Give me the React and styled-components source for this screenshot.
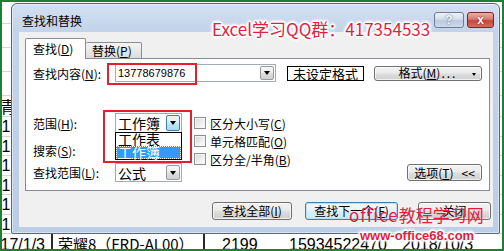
import React from 'react';
import styled, { createGlobalStyle, css } from 'styled-components';

const UI = `"Noto Sans CJK SC", "Noto Sans", sans-serif`;

const Global = createGlobalStyle`
  html, body { margin: 0; padding: 0; background: #fff; }
  body { width: 504px; height: 251px; overflow: hidden; font-family: ${UI}; }
  u { text-decoration: underline; text-underline-offset: 1px; }
`;

const Page = styled.div`
  position: relative;
  width: 504px;
  height: 251px;
  overflow: hidden;
  background: #fff;
  &::after {
    content: '';
    position: absolute;
    inset: 0;
    border: 2px solid #1f7f34;
    pointer-events: none;
    z-index: 20;
  }
`;

/* ---------- spreadsheet behind ---------- */
const Sheet = styled.div`
  display: flex;
  flex-direction: column;
  width: 504px;
`;

const SheetRow = styled.div`
  display: flex;
  flex: none;
  height: ${p => p.$h}px;
  box-sizing: border-box;
  border-bottom: 1px solid #d6d6d6;
  font: 16px/18px "Liberation Sans", Arial, sans-serif;
  color: #000;
`;

const Cell = styled.div`
  flex: none;
  width: ${p => p.$w}px;
  box-sizing: border-box;
  overflow: hidden;
  white-space: nowrap;
  text-align: ${p => p.$align || 'left'};
  padding-left: ${p => p.$pl || 0}px;
  padding-right: ${p => p.$pr || 0}px;
  padding-top: ${p => p.$pt || 0}px;
  font-size: ${p => p.$fs || 16}px;
  ${p => p.$cjk && css`font-family: ${UI};`}
  border-right: ${p => (p.$line ? '2px solid #2a2a2a' : 'none')};
`;

/* ---------- dialog ---------- */
const Dialog = styled.div`
  position: absolute;
  left: 11px;
  top: 3px;
  width: 489px;
  height: 231px;
  box-sizing: border-box;
  border: 1px solid #56667c;
  border-radius: 6px 6px 2px 2px;
  background: linear-gradient(#d3e0f1, #c2d3ea 28px, #bccee6);
  box-shadow: inset 0 0 0 1px rgba(255, 255, 255, 0.45);
  display: flex;
  flex-direction: column;
  font-family: ${UI};
  font-size: 12px;
  color: #000;
  z-index: 5;
`;

const TitleBar = styled.div`
  height: 28px;
  flex: none;
  display: flex;
  align-items: flex-start;
`;

const Title = styled.div`
  margin: 10px 0 0 10px;
  font-size: 12px;
  line-height: 14px;
  color: #000;
`;

const CaptionButtons = styled.div`
  margin: 8px 5px 0 auto;
  display: flex;
  gap: 3px;
`;

const CapBtn = styled.div`
  width: ${p => (p.$close ? 27 : 30)}px;
  height: 16px;
  box-sizing: border-box;
  border-radius: 3px;
  display: flex;
  align-items: center;
  justify-content: center;
  font: bold 12px/1 "Liberation Sans", Arial, sans-serif;
  ${p =>
    p.$close
      ? css`
          border: 1px solid #6e2b22;
          background: linear-gradient(#eab0a6, #d8796a 45%, #c4483a 55%, #d46f60);
          color: #fff;
          text-shadow: 0 0 2px #5a1a10;
        `
      : css`
          border: 1px solid #6c7c92;
          background: linear-gradient(#eef3fa, #d2ddeb 45%, #bac9de 55%, #cfdbeb);
          color: #f6f8fb;
          text-shadow: 0 0 2px #44526a;
        `}
`;

const Client = styled.div`
  flex: 1;
  margin: 0 6px 6px 7px;
  background: #f0f0f0;
  display: flex;
  flex-direction: column;
`;

const Tabs = styled.div`
  display: flex;
  align-items: flex-end;
  height: 21px;
  margin: 6px 0 0 6px;
  position: relative;
  z-index: 2;
`;

const Tab = styled.div`
  box-sizing: border-box;
  width: ${p => (p.$active ? 61 : 56)}px;
  height: ${p => (p.$active ? 21 : 17)}px;
  border: 1px solid #898c95;
  border-bottom: ${p => (p.$active ? 'none' : '1px solid #898c95')};
  border-left: ${p => (p.$active ? '1px solid #898c95' : 'none')};
  border-radius: 2px 2px 0 0;
  background: ${p => (p.$active ? '#fff' : 'linear-gradient(#f4f4f4, #e9e9e9 50%, #dcdcdc)')};
  padding-left: ${p => (p.$active ? 7 : 6)}px;
  line-height: ${p => (p.$active ? 20 : 15)}px;
  font-size: 12px;
  white-space: nowrap;
`;

const Panel = styled.div`
  margin: -1px 0 0 6px;
  width: 465px;
  height: 133px;
  box-sizing: border-box;
  border: 1px solid #898c95;
  background: #fff;
  padding: 5px 7px 0 7px;
  display: flex;
  flex-direction: column;
`;

const TopRow = styled.div`
  display: flex;
  align-items: center;
  height: 18px;
`;

const Label = styled.div`
  flex: none;
  width: 82px;
  font-size: 12px;
  white-space: nowrap;
`;

const Combo = styled.div`
  position: relative;
  flex: none;
  width: ${p => p.$w}px;
  height: ${p => p.$h}px;
  box-sizing: border-box;
  border: 1px solid #a3abb5;
  background: #fff;
  display: flex;
  align-items: stretch;
`;

const ComboText = styled.div`
  flex: 1;
  padding-left: ${p => (p.$mono ? 2 : 2)}px;
  display: flex;
  align-items: center;
  font: ${p => (p.$mono ? '11px "Liberation Sans", Arial, sans-serif' : `14px ${UI}`)};
  line-height: 14px;
  white-space: nowrap;
`;

const DropBtn = styled.div`
  flex: none;
  width: 14px;
  margin: 1px;
  box-sizing: border-box;
  border-radius: 2px;
  display: flex;
  align-items: center;
  justify-content: center;
  border: 1px solid ${p => (p.$active ? '#3c7fb1' : '#9a9a9a')};
  background: ${p =>
    p.$active
      ? 'linear-gradient(#eaf6fd, #d9f0fc 45%, #bee6fd 55%, #a7d9f5)'
      : 'linear-gradient(#f7f7f7, #ececec 45%, #dddddd 55%, #d0d0d0)'};
  &::after {
    content: '';
    border-left: 3.5px solid transparent;
    border-right: 3.5px solid transparent;
    border-top: 4px solid #000;
  }
`;

const FormatStatus = styled.div`
  flex: none;
  margin-left: 11px;
  width: 77px;
  height: 15px;
  box-sizing: border-box;
  border: 1px solid #000;
  font-size: 13px;
  line-height: 13px;
  display: flex;
  align-items: center;
  justify-content: center;
  white-space: nowrap;
`;

const Button = styled.div`
  position: relative;
  flex: none;
  width: ${p => p.$w}px;
  height: ${p => p.$h}px;
  margin-left: ${p => p.$ml || 0}px;
  box-sizing: border-box;
  border: 1px solid ${p => (p.$default ? '#3c7fb1' : '#707070')};
  border-radius: 3px;
  background: ${p =>
    p.$default
      ? 'linear-gradient(#f2f9fd, #e7f4fb 45%, #d8eefa 55%, #cce8f8)'
      : 'linear-gradient(#f2f2f2, #ebebeb 45%, #dddddd 55%, #cfcfcf)'};
  box-shadow: inset 0 0 0 1px ${p => (p.$default ? '#b8e0f6' : 'rgba(255,255,255,0.7)')};
  display: flex;
  align-items: center;
  justify-content: center;
  font-size: 12px;
  line-height: 12px;
  white-space: nowrap;
  ${p =>
    p.$arrow &&
    css`
      &::after {
        content: '';
        position: absolute;
        right: 5px;
        top: 6px;
        border-left: 2px solid transparent;
        border-right: 2px solid transparent;
        border-top: 3px solid #000;
      }
    `}
`;

const Dots = styled.span`
  letter-spacing: 2px;
  margin-left: 1px;
`;

const Lower = styled.div`
  display: flex;
  align-items: flex-start;
  margin-top: 31px;
  height: 69px;
`;

const LeftCol = styled.div`
  flex: none;
  width: 149px;
  display: flex;
  flex-direction: column;
`;

const FieldRow = styled.div`
  display: flex;
  align-items: center;
  height: ${p => p.$h}px;
  margin-top: ${p => p.$mt || 0}px;
`;

const DropList = styled.div`
  position: absolute;
  left: -1px;
  top: 100%;
  width: calc(100% + 2px);
  box-sizing: border-box;
  border: 1px solid #000;
  background: #fff;
  z-index: 3;
`;

const ListItem = styled.div`
  height: 13px;
  padding-left: 2px;
  font: 14px/13px ${UI};
  white-space: nowrap;
  ${p =>
    p.$selected &&
    css`
      background: #3399ff;
      color: #fff;
      outline: 1px dotted #ffe;
      outline-offset: -1px;
    `}
`;

const CheckCol = styled.div`
  flex: none;
  margin: 1px 0 0 12px;
  display: flex;
  flex-direction: column;
`;

const CheckRow = styled.div`
  height: 18px;
  display: flex;
  align-items: center;
  font-size: 12px;
  white-space: nowrap;
`;

const CheckBox = styled.span`
  flex: none;
  width: 12px;
  height: 12px;
  box-sizing: border-box;
  border: 1px solid #8f8f8f;
  background: linear-gradient(135deg, #d8d8d8, #f4f4f4 70%, #fff);
  box-shadow: inset 0 0 0 1px #f6f6f6;
  margin-right: 4px;
`;

const OptionsBtn = styled(Button)`
  margin-left: auto;
  align-self: flex-end;
  margin-bottom: 1px;
  gap: 8px;
`;

const ButtonRow = styled.div`
  display: flex;
  justify-content: flex-end;
  margin-top: 11px;
  padding-right: 2px;
  gap: 13px;
`;

/* ---------- overlays ---------- */
const RedBox = styled.div`
  position: absolute;
  left: ${p => p.$x}px;
  top: ${p => p.$y}px;
  width: ${p => p.$w}px;
  height: ${p => p.$h}px;
  box-sizing: border-box;
  border: 2px solid #e3202c;
  z-index: 8;
`;

const haloShadow = `0 0 1px #fff, 1px 1px 1px #fff, -1px -1px 1px #fff, 1px -1px 1px #fff, -1px 1px 1px #fff,
  2px 0 2px #fff, -2px 0 2px #fff, 0 2px 2px #fff, 0 -2px 2px #fff, 0 0 4px #fff, 0 0 5px #fff`;

const Watermark = styled.div`
  position: absolute;
  left: ${p => p.$x}px;
  top: ${p => p.$y}px;
  font-family: ${p => (p.$latin ? '"Liberation Sans", Arial, sans-serif' : UI)};
  font-size: ${p => p.$fs}px;
  font-weight: ${p => (p.$bold ? 700 : 400)};
  line-height: ${p => p.$lh}px;
  color: #e31e3c;
  white-space: nowrap;
  text-shadow: ${p => (p.$halo ? haloShadow : 'none')};
  z-index: 10;
`;

const Wide = styled.span`
  letter-spacing: 1px;
`;

const dataRows = Array.from({ length: 6 });

export default function App() {
  return (
    <>
      <Global />
      <Page>
        <Sheet>
          <SheetRow $h={24} />
          <SheetRow $h={24} />
          <SheetRow $h={24} />
          <SheetRow $h={24} />
          <SheetRow $h={21}>
            <Cell $w={52} $cjk $pt={1}>青</Cell>
          </SheetRow>
          {dataRows.map((_, i) => (
            <SheetRow key={i} $h={19.5}>
              <Cell $w={52} $align="right" $pr={6} $pt={1}>17/1/3</Cell>
            </SheetRow>
          ))}
          <SheetRow $h={17}>
            <Cell $w={53} $align="right" $pr={6} $pt={2} $line>17/1/3</Cell>
            <Cell $w={152} $pl={5} $pt={1} $cjk $fs={15} $line>荣耀8（FRD-AL00）</Cell>
            <Cell $w={82} $pl={17} $pt={2}>2199</Cell>
            <Cell $w={112} $pl={2} $pt={2}>15934522470</Cell>
            <Cell $w={100} $pl={3} $pt={2}>2018/10/3</Cell>
          </SheetRow>
        </Sheet>

        <Dialog>
          <TitleBar>
            <Title>查找和替换</Title>
            <CaptionButtons>
              <CapBtn>?</CapBtn>
              <CapBtn $close>x</CapBtn>
            </CaptionButtons>
          </TitleBar>
          <Client>
            <Tabs>
              <Tab $active>查找(<u>D</u>)</Tab>
              <Tab>替换(<u>P</u>)</Tab>
            </Tabs>
            <Panel>
              <TopRow>
                <Label>查找内容(<u>N</u>):</Label>
                <Combo $w={161} $h={18}>
                  <ComboText $mono>13778679876</ComboText>
                  <DropBtn />
                </Combo>
                <FormatStatus>未设定格式</FormatStatus>
                <Button $w={108} $h={15} $ml={10} $arrow>
                  格式(<u>M</u>)<Dots>...</Dots>
                </Button>
              </TopRow>
              <Lower>
                <LeftCol>
                  <FieldRow $h={20}>
                    <Label>范围(<u>H</u>):</Label>
                    <Combo $w={67} $h={20}>
                      <ComboText>工作簿</ComboText>
                      <DropBtn $active />
                      <DropList>
                        <ListItem>工作表</ListItem>
                        <ListItem $selected>工作簿</ListItem>
                      </DropList>
                    </Combo>
                  </FieldRow>
                  <FieldRow $h={19} $mt={8}>
                    <Label>搜索(<u>S</u>):</Label>
                    <Combo $w={67} $h={19}>
                      <ComboText>按行</ComboText>
                      <DropBtn />
                    </Combo>
                  </FieldRow>
                  <FieldRow $h={19} $mt={3}>
                    <Label>查找范围(<u>L</u>):</Label>
                    <Combo $w={67} $h={19}>
                      <ComboText>公式</ComboText>
                      <DropBtn />
                    </Combo>
                  </FieldRow>
                </LeftCol>
                <CheckCol>
                  <CheckRow><CheckBox />区分大小写(<u>C</u>)</CheckRow>
                  <CheckRow><CheckBox />单元格匹配(<u>O</u>)</CheckRow>
                  <CheckRow><CheckBox />区分全/半角(<u>B</u>)</CheckRow>
                </CheckCol>
                <OptionsBtn $w={75} $h={17}>
                  <span>选项(<u>T</u>)</span>
                  <span>&lt;&lt;</span>
                </OptionsBtn>
              </Lower>
            </Panel>
            <ButtonRow>
              <Button $w={80} $h={18}>查找全部(<u>I</u>)</Button>
              <Button $w={93} $h={18} $default>查找下一个(<u>F</u>)</Button>
              <Button $w={73} $h={18} $ml={7}>关闭</Button>
            </ButtonRow>
          </Client>
        </Dialog>

        <RedBox $x={107} $y={63} $w={90} $h={22} />
        <RedBox $x={103} $y={110} $w={89} $h={53} />

        <Watermark $x={212} $y={19} $fs={17} $lh={20} $halo>
          Excel学习QQ群：417354533
        </Watermark>
        <Watermark $x={349} $y={205} $fs={17} $lh={20}>
          <Wide>office</Wide>教程学习网
        </Watermark>
        <Watermark $x={360} $y={228} $fs={13} $lh={15} $latin $bold $halo>
          www-office68.com
        </Watermark>
      </Page>
    </>
  );
}
